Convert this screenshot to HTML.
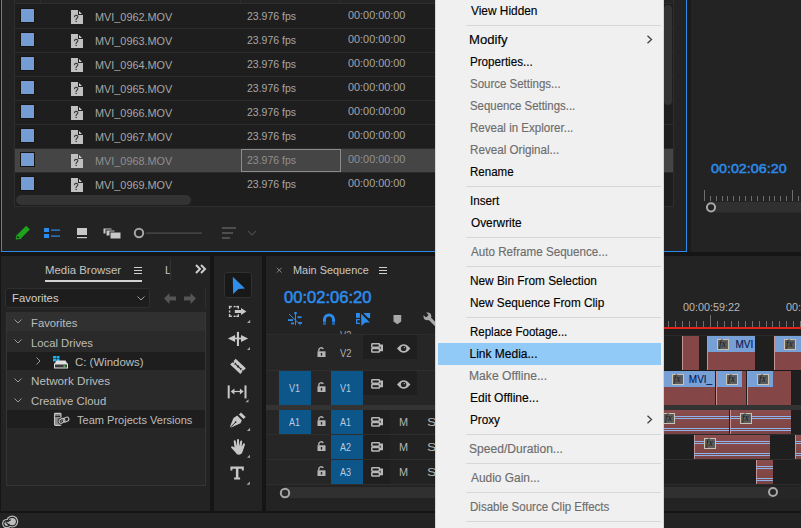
<!DOCTYPE html><html><head><meta charset="utf-8"><style>
*{margin:0;padding:0;box-sizing:border-box}
html,body{width:801px;height:528px;overflow:hidden;background:#151515;font-family:"Liberation Sans",sans-serif;position:relative}
.a{position:absolute}
.t{position:absolute;white-space:nowrap;line-height:1}
svg{position:absolute;overflow:visible}
</style></head><body>
<div class="a" style="left:1px;top:0px;width:686px;height:252px;background:#232323;border:1px solid #2d8ceb;border-top:none"></div>
<div class="a" style="left:14px;top:0px;width:660px;height:207px;background:#1e1e1e;border:1px solid #2e2e2e;border-top:none"></div>
<div class="a" style="left:15px;top:0px;width:658px;height:3px;background:#242424;"></div>
<div class="a" style="left:15px;top:3px;width:658px;height:1px;background:#2e2e2e;"></div>
<div class="a" style="left:40px;top:0px;width:1px;height:3px;background:#2e2e2e;"></div>
<div class="a" style="left:240px;top:0px;width:1px;height:3px;background:#2e2e2e;"></div>
<div class="a" style="left:340px;top:0px;width:1px;height:3px;background:#2e2e2e;"></div>
<div class="a" style="left:15px;top:28px;width:658px;height:1px;background:#2a2a2a;"></div>
<div class="a" style="left:20px;top:8px;width:15px;height:15px;background:#759dd3;border:1px solid #161412"></div>
<svg style="left:71px;top:10px" width="12" height="14" viewBox="0 0 12 14"><path d="M0 0H7V5H12V14H0Z" fill="#c0c0c0"/><path d="M8 1V4H11Z" fill="#d2d2d2"/><path d="M3.4 7.3Q3.5 5.4 5.2 5.4Q6.9 5.4 6.8 6.9Q6.7 7.8 5.8 8.4Q5.1 8.9 5.1 10" fill="none" stroke="#3a3a3a" stroke-width="1.1"/><rect x="4.5" y="10.8" width="1.3" height="1.2" fill="#3a3a3a"/></svg>
<div class="t" style="left:94.51px;top:12.00px;font-size:11px;font-weight:normal;font-style:normal;color:#a6a6a6;transform:scaleX(0.9870);transform-origin:0 0;">MVI_0962.MOV</div>
<div class="t" style="left:247.00px;top:11.00px;font-size:11px;font-weight:normal;font-style:normal;color:#a6a6a6;transform:scaleX(0.9549);transform-origin:0 0;">23.976 fps</div>
<div class="t" style="left:348.00px;top:10.00px;font-size:11px;font-weight:normal;font-style:normal;color:#a6a6a6;transform:scaleX(0.9879);transform-origin:0 0;">00:00:00:00</div>
<div class="a" style="left:15px;top:52px;width:658px;height:1px;background:#2a2a2a;"></div>
<div class="a" style="left:20px;top:32px;width:15px;height:15px;background:#759dd3;border:1px solid #161412"></div>
<svg style="left:71px;top:34px" width="12" height="14" viewBox="0 0 12 14"><path d="M0 0H7V5H12V14H0Z" fill="#c0c0c0"/><path d="M8 1V4H11Z" fill="#d2d2d2"/><path d="M3.4 7.3Q3.5 5.4 5.2 5.4Q6.9 5.4 6.8 6.9Q6.7 7.8 5.8 8.4Q5.1 8.9 5.1 10" fill="none" stroke="#3a3a3a" stroke-width="1.1"/><rect x="4.5" y="10.8" width="1.3" height="1.2" fill="#3a3a3a"/></svg>
<div class="t" style="left:94.51px;top:36.00px;font-size:11px;font-weight:normal;font-style:normal;color:#a6a6a6;transform:scaleX(0.9870);transform-origin:0 0;">MVI_0963.MOV</div>
<div class="t" style="left:247.00px;top:35.00px;font-size:11px;font-weight:normal;font-style:normal;color:#a6a6a6;transform:scaleX(0.9549);transform-origin:0 0;">23.976 fps</div>
<div class="t" style="left:348.00px;top:34.00px;font-size:11px;font-weight:normal;font-style:normal;color:#a6a6a6;transform:scaleX(0.9879);transform-origin:0 0;">00:00:00:00</div>
<div class="a" style="left:15px;top:76px;width:658px;height:1px;background:#2a2a2a;"></div>
<div class="a" style="left:20px;top:56px;width:15px;height:15px;background:#759dd3;border:1px solid #161412"></div>
<svg style="left:71px;top:58px" width="12" height="14" viewBox="0 0 12 14"><path d="M0 0H7V5H12V14H0Z" fill="#c0c0c0"/><path d="M8 1V4H11Z" fill="#d2d2d2"/><path d="M3.4 7.3Q3.5 5.4 5.2 5.4Q6.9 5.4 6.8 6.9Q6.7 7.8 5.8 8.4Q5.1 8.9 5.1 10" fill="none" stroke="#3a3a3a" stroke-width="1.1"/><rect x="4.5" y="10.8" width="1.3" height="1.2" fill="#3a3a3a"/></svg>
<div class="t" style="left:94.51px;top:60.00px;font-size:11px;font-weight:normal;font-style:normal;color:#a6a6a6;transform:scaleX(0.9870);transform-origin:0 0;">MVI_0964.MOV</div>
<div class="t" style="left:247.00px;top:59.00px;font-size:11px;font-weight:normal;font-style:normal;color:#a6a6a6;transform:scaleX(0.9549);transform-origin:0 0;">23.976 fps</div>
<div class="t" style="left:348.00px;top:58.00px;font-size:11px;font-weight:normal;font-style:normal;color:#a6a6a6;transform:scaleX(0.9879);transform-origin:0 0;">00:00:00:00</div>
<div class="a" style="left:15px;top:100px;width:658px;height:1px;background:#2a2a2a;"></div>
<div class="a" style="left:20px;top:80px;width:15px;height:15px;background:#759dd3;border:1px solid #161412"></div>
<svg style="left:71px;top:82px" width="12" height="14" viewBox="0 0 12 14"><path d="M0 0H7V5H12V14H0Z" fill="#c0c0c0"/><path d="M8 1V4H11Z" fill="#d2d2d2"/><path d="M3.4 7.3Q3.5 5.4 5.2 5.4Q6.9 5.4 6.8 6.9Q6.7 7.8 5.8 8.4Q5.1 8.9 5.1 10" fill="none" stroke="#3a3a3a" stroke-width="1.1"/><rect x="4.5" y="10.8" width="1.3" height="1.2" fill="#3a3a3a"/></svg>
<div class="t" style="left:94.51px;top:84.00px;font-size:11px;font-weight:normal;font-style:normal;color:#a6a6a6;transform:scaleX(0.9870);transform-origin:0 0;">MVI_0965.MOV</div>
<div class="t" style="left:247.00px;top:83.00px;font-size:11px;font-weight:normal;font-style:normal;color:#a6a6a6;transform:scaleX(0.9549);transform-origin:0 0;">23.976 fps</div>
<div class="t" style="left:348.00px;top:82.00px;font-size:11px;font-weight:normal;font-style:normal;color:#a6a6a6;transform:scaleX(0.9879);transform-origin:0 0;">00:00:00:00</div>
<div class="a" style="left:15px;top:124px;width:658px;height:1px;background:#2a2a2a;"></div>
<div class="a" style="left:20px;top:104px;width:15px;height:15px;background:#759dd3;border:1px solid #161412"></div>
<svg style="left:71px;top:106px" width="12" height="14" viewBox="0 0 12 14"><path d="M0 0H7V5H12V14H0Z" fill="#c0c0c0"/><path d="M8 1V4H11Z" fill="#d2d2d2"/><path d="M3.4 7.3Q3.5 5.4 5.2 5.4Q6.9 5.4 6.8 6.9Q6.7 7.8 5.8 8.4Q5.1 8.9 5.1 10" fill="none" stroke="#3a3a3a" stroke-width="1.1"/><rect x="4.5" y="10.8" width="1.3" height="1.2" fill="#3a3a3a"/></svg>
<div class="t" style="left:94.51px;top:108.00px;font-size:11px;font-weight:normal;font-style:normal;color:#a6a6a6;transform:scaleX(0.9870);transform-origin:0 0;">MVI_0966.MOV</div>
<div class="t" style="left:247.00px;top:107.00px;font-size:11px;font-weight:normal;font-style:normal;color:#a6a6a6;transform:scaleX(0.9549);transform-origin:0 0;">23.976 fps</div>
<div class="t" style="left:348.00px;top:106.00px;font-size:11px;font-weight:normal;font-style:normal;color:#a6a6a6;transform:scaleX(0.9879);transform-origin:0 0;">00:00:00:00</div>
<div class="a" style="left:15px;top:148px;width:658px;height:1px;background:#2a2a2a;"></div>
<div class="a" style="left:20px;top:128px;width:15px;height:15px;background:#759dd3;border:1px solid #161412"></div>
<svg style="left:71px;top:130px" width="12" height="14" viewBox="0 0 12 14"><path d="M0 0H7V5H12V14H0Z" fill="#c0c0c0"/><path d="M8 1V4H11Z" fill="#d2d2d2"/><path d="M3.4 7.3Q3.5 5.4 5.2 5.4Q6.9 5.4 6.8 6.9Q6.7 7.8 5.8 8.4Q5.1 8.9 5.1 10" fill="none" stroke="#3a3a3a" stroke-width="1.1"/><rect x="4.5" y="10.8" width="1.3" height="1.2" fill="#3a3a3a"/></svg>
<div class="t" style="left:94.51px;top:132.00px;font-size:11px;font-weight:normal;font-style:normal;color:#a6a6a6;transform:scaleX(0.9870);transform-origin:0 0;">MVI_0967.MOV</div>
<div class="t" style="left:247.00px;top:131.00px;font-size:11px;font-weight:normal;font-style:normal;color:#a6a6a6;transform:scaleX(0.9549);transform-origin:0 0;">23.976 fps</div>
<div class="t" style="left:348.00px;top:130.00px;font-size:11px;font-weight:normal;font-style:normal;color:#a6a6a6;transform:scaleX(0.9879);transform-origin:0 0;">00:00:00:00</div>
<div class="a" style="left:15px;top:149px;width:658px;height:23px;background:#454545;"></div>
<div class="a" style="left:15px;top:172px;width:658px;height:1px;background:#2a2a2a;"></div>
<div class="a" style="left:20px;top:152px;width:15px;height:15px;background:#759dd3;border:1px solid #161412"></div>
<svg style="left:71px;top:154px" width="12" height="14" viewBox="0 0 12 14"><path d="M0 0H7V5H12V14H0Z" fill="#c0c0c0"/><path d="M8 1V4H11Z" fill="#d2d2d2"/><path d="M3.4 7.3Q3.5 5.4 5.2 5.4Q6.9 5.4 6.8 6.9Q6.7 7.8 5.8 8.4Q5.1 8.9 5.1 10" fill="none" stroke="#3a3a3a" stroke-width="1.1"/><rect x="4.5" y="10.8" width="1.3" height="1.2" fill="#3a3a3a"/></svg>
<div class="t" style="left:94.51px;top:156.00px;font-size:11px;font-weight:normal;font-style:normal;color:#8f8f8f;transform:scaleX(0.9870);transform-origin:0 0;">MVI_0968.MOV</div>
<div class="t" style="left:247.00px;top:155.00px;font-size:11px;font-weight:normal;font-style:normal;color:#8f8f8f;transform:scaleX(0.9549);transform-origin:0 0;">23.976 fps</div>
<div class="t" style="left:348.00px;top:154.00px;font-size:11px;font-weight:normal;font-style:normal;color:#8f8f8f;transform:scaleX(0.9879);transform-origin:0 0;">00:00:00:00</div>
<div class="a" style="left:20px;top:176px;width:15px;height:15px;background:#759dd3;border:1px solid #161412"></div>
<svg style="left:71px;top:178px" width="12" height="14" viewBox="0 0 12 14"><path d="M0 0H7V5H12V14H0Z" fill="#c0c0c0"/><path d="M8 1V4H11Z" fill="#d2d2d2"/><path d="M3.4 7.3Q3.5 5.4 5.2 5.4Q6.9 5.4 6.8 6.9Q6.7 7.8 5.8 8.4Q5.1 8.9 5.1 10" fill="none" stroke="#3a3a3a" stroke-width="1.1"/><rect x="4.5" y="10.8" width="1.3" height="1.2" fill="#3a3a3a"/></svg>
<div class="t" style="left:94.51px;top:180.00px;font-size:11px;font-weight:normal;font-style:normal;color:#a6a6a6;transform:scaleX(0.9870);transform-origin:0 0;">MVI_0969.MOV</div>
<div class="t" style="left:247.00px;top:179.00px;font-size:11px;font-weight:normal;font-style:normal;color:#a6a6a6;transform:scaleX(0.9549);transform-origin:0 0;">23.976 fps</div>
<div class="t" style="left:348.00px;top:178.00px;font-size:11px;font-weight:normal;font-style:normal;color:#a6a6a6;transform:scaleX(0.9879);transform-origin:0 0;">00:00:00:00</div>
<div class="a" style="left:241px;top:149px;width:100px;height:23px;background:transparent;border:1px solid #8c8c8c"></div>
<div class="a" style="left:16px;top:195px;width:175px;height:10px;background:#333;border-radius:5px"></div>
<div class="a" style="left:664px;top:5px;width:8px;height:100px;background:#333;border-radius:4px"></div>
<svg style="left:12.5px;top:224.3px" width="18" height="17" viewBox="0 0 18 17"><path d="M3 15L4.2 10.8L13.2 1.8L16.9 5.5L7.9 14.5Z" fill="#1ea31e"/><path d="M3.4 14.6L4.6 11.4L7.3 14Z" fill="#232323"/><path d="M3 15L4.2 10.8L7.9 14.5Z" fill="none" stroke="#1ea31e" stroke-width="1"/></svg>
<svg style="left:43px;top:227px" width="18" height="12" viewBox="0 0 18 12"><rect x="1" y="1" width="5" height="4" fill="#2d8ceb"/><rect x="1" y="7" width="5" height="4" fill="#2d8ceb"/><rect x="8" y="2.5" width="9" height="1.2" fill="#2d8ceb"/><rect x="8" y="8.5" width="9" height="1.2" fill="#2d8ceb"/></svg>
<svg style="left:76px;top:227px" width="12" height="12" viewBox="0 0 12 12"><rect x="1" y="1" width="10" height="7" fill="#c8c8c8"/><rect x="1" y="10" width="10" height="1.2" fill="#c8c8c8"/></svg>
<svg style="left:102px;top:227px" width="20" height="12" viewBox="0 0 20 12"><rect x="1" y="1" width="9" height="6" fill="#c8c8c8" stroke="#232323"/><rect x="4" y="3" width="9" height="6" fill="#c8c8c8" stroke="#232323"/><rect x="8" y="5" width="11" height="7" fill="#c8c8c8" stroke="#232323"/></svg>
<svg style="left:132px;top:226px" width="72" height="14" viewBox="0 0 72 14"><circle cx="7" cy="7" r="4.2" fill="none" stroke="#a5a5a5" stroke-width="2"/><rect x="14" y="6.5" width="56" height="1.2" fill="#505050"/></svg>
<svg style="left:221px;top:226px" width="16" height="14" viewBox="0 0 16 14"><rect x="1" y="1" width="14" height="2" fill="#4e4e4e"/><rect x="1" y="6" width="11" height="2" fill="#4e4e4e"/><rect x="1" y="11" width="8" height="2" fill="#4e4e4e"/></svg>
<svg style="left:247px;top:230px" width="10" height="6" viewBox="0 0 10 6"><path d="M1 1L5 5L9 1" fill="none" stroke="#4a4a4a" stroke-width="1.2"/></svg>
<div class="a" style="left:687px;top:0px;width:4px;height:252px;background:#1b1b1b;"></div>
<div class="a" style="left:691px;top:0px;width:110px;height:252px;background:#232323;"></div>
<div class="t" style="left:711.00px;top:162.00px;font-size:13.7px;font-weight:normal;font-style:normal;color:#2d8ceb;transform:scaleX(1.0458);transform-origin:0 0;-webkit-text-stroke:0.5px #2d8ceb">00:02:06:20</div>
<svg style="left:0;top:0" width="801" height="252"><rect x="704" y="190" width="1" height="11" fill="#6e6e6e"/><rect x="710" y="196" width="1" height="5" fill="#6e6e6e"/><rect x="716" y="196" width="1" height="5" fill="#6e6e6e"/><rect x="722" y="196" width="1" height="5" fill="#6e6e6e"/><rect x="727" y="196" width="1" height="5" fill="#6e6e6e"/><rect x="733" y="196" width="1" height="5" fill="#6e6e6e"/><rect x="739" y="196" width="1" height="5" fill="#6e6e6e"/><rect x="745" y="196" width="1" height="5" fill="#6e6e6e"/><rect x="751" y="196" width="1" height="5" fill="#6e6e6e"/><rect x="757" y="196" width="1" height="5" fill="#6e6e6e"/><rect x="763" y="196" width="1" height="5" fill="#6e6e6e"/><rect x="769" y="196" width="1" height="5" fill="#6e6e6e"/><rect x="774" y="196" width="1" height="5" fill="#6e6e6e"/><rect x="780" y="196" width="1" height="5" fill="#6e6e6e"/><rect x="786" y="196" width="1" height="5" fill="#6e6e6e"/><rect x="792" y="190" width="1" height="11" fill="#6e6e6e"/><rect x="798" y="196" width="1" height="5" fill="#6e6e6e"/><rect x="711" y="202" width="90" height="10.5" fill="#303030"/><circle cx="711" cy="207.3" r="4.1" fill="#232323" stroke="#a8a8a8" stroke-width="2"/></svg>
<div class="a" style="left:1px;top:256px;width:209px;height:255px;background:#232323;"></div>
<div class="t" style="left:45.16px;top:265.00px;font-size:11px;font-weight:normal;font-style:normal;color:#c4c4c4;transform:scaleX(1.0375);transform-origin:0 0;">Media Browser</div>
<div class="a" style="left:45px;top:280px;width:97px;height:2px;background:#d2d2d2;"></div>
<div class="a" style="left:134px;top:267px;width:8px;height:1.3px;background:#d0d0d0;"></div>
<div class="a" style="left:134px;top:270px;width:8px;height:1.3px;background:#d0d0d0;"></div>
<div class="a" style="left:134px;top:273px;width:8px;height:1.3px;background:#d0d0d0;"></div>
<div class="t" style="left:165.00px;top:265.00px;font-size:11px;font-weight:normal;font-style:normal;color:#c4c4c4;">L</div>
<div class="a" style="left:170px;top:259px;width:1px;height:21px;background:#333;"></div>
<svg style="left:195px;top:264px" width="12" height="10" viewBox="0 0 12 10"><path d="M1 1L5 5L1 9M6 1L10 5L6 9" fill="none" stroke="#cfcfcf" stroke-width="2"/></svg>
<div class="a" style="left:5px;top:288px;width:145px;height:20px;background:#1d1d1d;border:1px solid #2e2e2e;border-radius:3px"></div>
<div class="t" style="left:12.17px;top:293.00px;font-size:11px;font-weight:normal;font-style:normal;color:#cfcfcf;transform:scaleX(1.0295);transform-origin:0 0;">Favorites</div>
<svg style="left:137px;top:296px" width="8" height="5" viewBox="0 0 8 5"><path d="M0.5 0.5L4 4L7.5 0.5" fill="none" stroke="#a0a0a0" stroke-width="1"/></svg>
<svg style="left:164px;top:293px" width="12" height="11" viewBox="0 0 12 11"><path d="M0 5.5L5.5 0V3.5H12V7.5H5.5V11Z" fill="#555"/></svg>
<svg style="left:184px;top:293px" width="12" height="11" viewBox="0 0 12 11"><path d="M12 5.5L6.5 0V3.5H0V7.5H6.5V11Z" fill="#555"/></svg>
<div class="a" style="left:205px;top:288px;width:1px;height:20px;background:#2e2e2e;"></div>
<div class="a" style="left:6px;top:312px;width:200px;height:174px;background:#262626;border:1px solid #353535;border-top:none"></div>
<div class="a" style="left:7px;top:312px;width:198px;height:19px;background:#303030;"></div>
<svg style="left:14px;top:319.2px" width="8" height="5" viewBox="0 0 8 5"><path d="M0.5 0.5L4 4L7.5 0.5" fill="none" stroke="#9a9a9a" stroke-width="1"/></svg>
<div class="t" style="left:31.08px;top:318.00px;font-size:11px;font-weight:normal;font-style:normal;color:#bdbdbd;transform:scaleX(1.0250);transform-origin:0 0;">Favorites</div>
<div class="a" style="left:7px;top:331px;width:198px;height:21px;background:#2a2a2a;"></div>
<svg style="left:14px;top:339.2px" width="8" height="5" viewBox="0 0 8 5"><path d="M0.5 0.5L4 4L7.5 0.5" fill="none" stroke="#9a9a9a" stroke-width="1"/></svg>
<div class="t" style="left:31.08px;top:338.00px;font-size:11px;font-weight:normal;font-style:normal;color:#bdbdbd;transform:scaleX(1.0237);transform-origin:0 0;">Local Drives</div>
<div class="a" style="left:7px;top:352px;width:198px;height:18px;background:#1e1e1e;"></div>
<svg style="left:36px;top:357.0px" width="5" height="8" viewBox="0 0 5 8"><path d="M0.5 0.5L4 4L0.5 7.5" fill="none" stroke="#9a9a9a" stroke-width="1"/></svg>
<div class="t" style="left:75.46px;top:357.00px;font-size:11px;font-weight:normal;font-style:normal;color:#bdbdbd;transform:scaleX(1.0391);transform-origin:0 0;">C: (Windows)</div>
<div class="a" style="left:7px;top:370px;width:198px;height:20px;background:#2a2a2a;"></div>
<svg style="left:14px;top:377.7px" width="8" height="5" viewBox="0 0 8 5"><path d="M0.5 0.5L4 4L7.5 0.5" fill="none" stroke="#9a9a9a" stroke-width="1"/></svg>
<div class="t" style="left:31.04px;top:376.00px;font-size:11px;font-weight:normal;font-style:normal;color:#bdbdbd;transform:scaleX(1.0616);transform-origin:0 0;">Network Drives</div>
<div class="a" style="left:7px;top:390px;width:198px;height:20px;background:#2a2a2a;"></div>
<svg style="left:14px;top:397.7px" width="8" height="5" viewBox="0 0 8 5"><path d="M0.5 0.5L4 4L7.5 0.5" fill="none" stroke="#9a9a9a" stroke-width="1"/></svg>
<div class="t" style="left:31.07px;top:396.00px;font-size:11px;font-weight:normal;font-style:normal;color:#bdbdbd;transform:scaleX(1.0338);transform-origin:0 0;">Creative Cloud</div>
<div class="a" style="left:7px;top:410px;width:198px;height:18px;background:#1e1e1e;"></div>
<div class="t" style="left:76.70px;top:415.00px;font-size:11px;font-weight:normal;font-style:normal;color:#bdbdbd;transform:scaleX(1.0035);transform-origin:0 0;">Team Projects Versions</div>
<svg style="left:52px;top:355px" width="17" height="14" viewBox="0 0 17 14"><rect x="1" y="1" width="3" height="2.5" fill="#1aaff0"/><rect x="4.5" y="1" width="3" height="2.5" fill="#1aaff0"/><rect x="1" y="4" width="3" height="2.5" fill="#1aaff0"/><rect x="4.5" y="4" width="3" height="2.5" fill="#1aaff0"/><path d="M4.5 5.5H13.5L15.5 9H2.5Z" fill="#e0e0e0"/><rect x="2.5" y="9" width="13" height="4" fill="#3a3a3a" stroke="#e0e0e0" stroke-width="1"/><rect x="11.5" y="10.5" width="1.8" height="1.5" fill="#3bd14b"/></svg>
<svg style="left:53px;top:412px" width="17" height="14" viewBox="0 0 17 14"><rect x="1.5" y="1.4" width="6.5" height="12" rx="0.8" fill="#8a8a8a" stroke="#c4c4c4" stroke-width="1.1"/><rect x="2.2" y="3.8" width="5.1" height="1.1" fill="#1e1e1e"/><rect x="6" y="6.8" width="6" height="4" rx="2" transform="rotate(-28 9 8.8)" fill="none" stroke="#1e1e1e" stroke-width="2.6"/><rect x="6" y="6.8" width="6" height="4" rx="2" transform="rotate(-28 9 8.8)" fill="none" stroke="#c4c4c4" stroke-width="1.1"/><rect x="10" y="5.6" width="6" height="4" rx="2" transform="rotate(-28 13 7.6)" fill="none" stroke="#c4c4c4" stroke-width="1.1"/></svg>
<div class="a" style="left:214px;top:256px;width:48px;height:255px;background:#232323;"></div>
<div class="a" style="left:224px;top:272px;width:28px;height:26px;background:#181818;border:1px solid #313131;border-radius:3px"></div>
<svg style="left:0;top:0" width="801" height="528"><path d="M232.8 276.8L245 288.5L238.5 289L233.1 294.1Z" fill="#2f8ee9"/><rect x="228.9" y="305.9" width="3" height="1.4" fill="#c8c8c8"/><rect x="228.9" y="305.9" width="1.4" height="3" fill="#c8c8c8"/><rect x="233.6" y="305.9" width="2" height="1.4" fill="#c8c8c8"/><rect x="236.3" y="305.9" width="2.7" height="1.4" fill="#c8c8c8"/><rect x="237.6" y="305.9" width="1.4" height="2.8" fill="#c8c8c8"/><rect x="236.3" y="315.6" width="2.7" height="1.4" fill="#c8c8c8"/><rect x="237.6" y="314.3" width="1.4" height="2.7" fill="#c8c8c8"/><rect x="233.6" y="315.6" width="2" height="1.4" fill="#c8c8c8"/><rect x="228.9" y="315.6" width="3" height="1.4" fill="#c8c8c8"/><rect x="228.9" y="314" width="1.4" height="3" fill="#c8c8c8"/><rect x="228.9" y="310.4" width="1.4" height="2.2" fill="#c8c8c8"/><path d="M234.8 310.1H241V308.1L246.4 311.5L241 315V313H234.8Z" fill="#c8c8c8"/><path d="M247 323L250.2 319.8V323Z" fill="#a8a8a8"/><rect x="236.9" y="331.9" width="2.1" height="14.1" fill="#c8c8c8"/><path d="M227.9 338.4L235.1 334.9V342Z M248.1 338.4L241 334.9V342Z" fill="#c8c8c8"/><rect x="235" y="337.6" width="6" height="1.7" fill="#c8c8c8"/><path d="M247 350L250 347V350Z" fill="#a8a8a8"/><g transform="translate(238,366.4) rotate(43.5)"><rect x="-7" y="-4" width="14" height="8" fill="#c8c8c8"/><path d="M-4.5 -1.5L-3 0L-4.5 1.5Z M4.5 -1.5L3 0L4.5 1.5Z" fill="#222"/><rect x="-4" y="-0.55" width="8" height="1.1" fill="#222"/><circle cx="0" cy="0" r="1.1" fill="#222"/><path d="M-7 -1.2A1.2 1.2 0 0 1 -7 1.2Z M7 -1.2A1.2 1.2 0 0 0 7 1.2Z" fill="#232323"/></g><rect x="227.7" y="385.4" width="2" height="13" fill="#c8c8c8"/><rect x="244.5" y="385.4" width="2" height="13" fill="#c8c8c8"/><path d="M230.7 391.5L234.4 388.6V394.6Z M243.6 391.5L239.9 388.6V394.6Z" fill="#c8c8c8"/><rect x="234" y="390.9" width="6.2" height="1.2" fill="#c8c8c8"/><path d="M245.4 402.3L248.5 399.2V402.3Z" fill="#a8a8a8"/><path d="M238.8 414.4L241 412.4L245.7 417.1L243.5 419.1Z" fill="#c8c8c8"/><path d="M233.5 418L237.2 415.6L241.8 420.2L240.5 423.2L231.2 427.6L230 426.6Z" fill="#c8c8c8"/><path d="M231 426.8L235.5 422.3" stroke="#232323" stroke-width="1"/><circle cx="235.6" cy="422.2" r="0.9" fill="#232323"/><path d="M246.9 430.9L250.1 427.7V430.9Z" fill="#a8a8a8"/><path d="M234.5 447.5L233.7 441.2A1 1 0 0 1 235.6 440.8L236.9 446.3L237 440A1 1 0 0 1 239 440L239.3 446.2L240.3 441A1 1 0 0 1 242.2 441.4L241.6 446.8L243.3 443.6A1 1 0 0 1 245 444.4L242.4 452.3A3.6 3.6 0 0 1 235.6 452.5L231.2 447.7A1 1 0 0 1 232.4 446.3Z" fill="#c8c8c8"/><path d="M247 457.7L250 454.7V457.7Z" fill="#a8a8a8"/><path d="M230.4 466.4H243.8V470.4H241.8V468.7H238.4V477.6H240.1V479.6H234.1V477.6H235.9V468.7H232.4V470.4H230.4Z" fill="#c8c8c8"/><path d="M246.6 484.8L249.8 481.6V484.8Z" fill="#a8a8a8"/></svg>
<div class="a" style="left:266px;top:256px;width:535px;height:255px;background:#232323;"></div>
<svg style="left:275.3px;top:266.3px" width="8" height="8" viewBox="0 0 8 8"><path d="M1.8 1.8L6.6 6.6M6.6 1.8L1.8 6.6" stroke="#858585" stroke-width="1"/></svg>
<div class="t" style="left:293.21px;top:265.00px;font-size:11px;font-weight:normal;font-style:normal;color:#c8c8c8;transform:scaleX(0.9907);transform-origin:0 0;">Main Sequence</div>
<div class="a" style="left:379px;top:267px;width:8px;height:1.3px;background:#cfcfcf;"></div>
<div class="a" style="left:379px;top:270px;width:8px;height:1.3px;background:#cfcfcf;"></div>
<div class="a" style="left:379px;top:273px;width:8px;height:1.3px;background:#cfcfcf;"></div>
<div class="t" style="left:284.00px;top:289.00px;font-size:16.5px;font-weight:normal;font-style:normal;color:#2d8ceb;transform:scaleX(1.0035);transform-origin:0 0;-webkit-text-stroke:0.55px #2d8ceb">00:02:06:20</div>
<svg style="left:0;top:0" width="801" height="528"><rect x="294.3" y="312" width="2.4" height="2.2" fill="#2d8ceb"/><rect x="295" y="314" width="1" height="11" fill="#2d8ceb"/><rect x="288" y="319.2" width="5" height="1.8" fill="#2d8ceb"/><rect x="297.5" y="316.3" width="4" height="1.8" fill="#2d8ceb"/><rect x="291" y="322.5" width="3" height="1.8" fill="#2d8ceb"/><rect x="298.5" y="322" width="3.5" height="1.8" fill="#2d8ceb"/><path d="M289 314L300.5 325" stroke="#2d8ceb" stroke-width="1"/><path d="M323 325V319.5A6 6 0 0 1 335 319.5V325H332V319.5A3 3 0 0 0 326 319.5V325Z" fill="#2d8ceb"/><rect x="323" y="321.5" width="3" height="3.5" fill="#1f5fa0"/><rect x="332" y="321.5" width="3" height="3.5" fill="#1f5fa0"/><rect x="356" y="313" width="3.9" height="4.8" fill="#2d8ceb"/><path d="M359.9 319.6H356.6V323.4H359.9" fill="none" stroke="#2d8ceb" stroke-width="1.2"/><path d="M363.3 313H370.1V318H368.3Z" fill="#2d8ceb"/><path d="M361 313.8L369.9 322.4L365.3 322.6L361.4 326.1Z" fill="#2d8ceb"/><path d="M393.5 315H401.2V321.5L397.35 324.3L393.5 321.5Z" fill="#a8a8a8"/><circle cx="427.4" cy="316.3" r="3.9" fill="#aaaaaa"/><path d="M427.4 316.3L436 324.8" stroke="#aaaaaa" stroke-width="3.3"/><path d="M422.6 314.2L425.2 311.6L428.6 315L426 317.6Z" fill="#232323"/></svg>
<div class="a" style="left:330px;top:329px;width:40px;height:5px;overflow:hidden"><div class="a" style="left:-330px;top:-329px;width:801px;height:528px"><div class="t" style="left:340.00px;top:331.00px;font-size:10px;font-weight:normal;font-style:normal;color:#a0a0a0;transform:scaleX(0.9333);transform-origin:0 0;">V2</div></div></div>
<div class="a" style="left:266px;top:334px;width:169px;height:1px;background:#2c2c2c;"></div>
<div class="a" style="left:266px;top:335px;width:169px;height:35px;background:#262626;"></div>
<div class="a" style="left:363px;top:335px;width:54px;height:24px;background:#1f1f1f;"></div>
<svg style="left:317px;top:347px" width="9" height="10" viewBox="0 0 9 10"><path d="M1.8 4.5V3.2A2.4 2.4 0 0 1 6.3 2" fill="none" stroke="#b5b5b5" stroke-width="1.4"/><rect x="0.5" y="4.3" width="8" height="5.7" fill="#b5b5b5"/><rect x="3.8" y="6" width="1.4" height="2.6" fill="#262626"/></svg>
<div class="t" style="left:340.00px;top:349.00px;font-size:10px;font-weight:normal;font-style:normal;color:#b0b0b0;transform:scaleX(0.9333);transform-origin:0 0;">V2</div>
<svg style="left:371px;top:343px" width="13" height="10" viewBox="0 0 13 10"><rect x="0.8" y="0.8" width="7.6" height="3.4" rx="0.6" fill="none" stroke="#b8b8b8" stroke-width="1.5"/><rect x="0.8" y="5.6" width="7.6" height="3.4" rx="0.6" fill="none" stroke="#b8b8b8" stroke-width="1.5"/><path d="M8.4 1.5H12V8.2H8.4V6H9.6V3.6H8.4Z" fill="#b8b8b8"/></svg>
<svg style="left:397px;top:344px" width="14" height="9" viewBox="0 0 14 9"><path d="M0 4.5Q6.7 -4 13.4 4.5Q6.7 13 0 4.5Z" fill="#b8b8b8"/><circle cx="6.6" cy="4.4" r="2.7" fill="#222"/><circle cx="7.4" cy="3.6" r="0.75" fill="#9a9a9a"/></svg>
<div class="a" style="left:266px;top:370px;width:169px;height:1px;background:#2e2e2e;"></div>
<div class="a" style="left:266px;top:371px;width:169px;height:34px;background:#262626;"></div>
<div class="a" style="left:363px;top:371px;width:54px;height:24px;background:#1f1f1f;"></div>
<div class="a" style="left:279px;top:371px;width:32px;height:34px;background:#0c5689;"></div>
<div class="a" style="left:331px;top:371px;width:32px;height:34px;background:#0c5689;"></div>
<div class="t" style="left:289.10px;top:384.00px;font-size:10px;font-weight:normal;font-style:normal;color:#b9cbe0;transform:scaleX(0.9000);transform-origin:0 0;">V1</div>
<div class="t" style="left:340.00px;top:384.00px;font-size:10px;font-weight:normal;font-style:normal;color:#b9cbe0;transform:scaleX(0.9000);transform-origin:0 0;">V1</div>
<svg style="left:317px;top:382px" width="9" height="10" viewBox="0 0 9 10"><path d="M1.8 4.5V3.2A2.4 2.4 0 0 1 6.3 2" fill="none" stroke="#b5b5b5" stroke-width="1.4"/><rect x="0.5" y="4.3" width="8" height="5.7" fill="#b5b5b5"/><rect x="3.8" y="6" width="1.4" height="2.6" fill="#262626"/></svg>
<svg style="left:371px;top:379px" width="13" height="10" viewBox="0 0 13 10"><rect x="0.8" y="0.8" width="7.6" height="3.4" rx="0.6" fill="none" stroke="#b8b8b8" stroke-width="1.5"/><rect x="0.8" y="5.6" width="7.6" height="3.4" rx="0.6" fill="none" stroke="#b8b8b8" stroke-width="1.5"/><path d="M8.4 1.5H12V8.2H8.4V6H9.6V3.6H8.4Z" fill="#b8b8b8"/></svg>
<svg style="left:397px;top:380px" width="14" height="9" viewBox="0 0 14 9"><path d="M0 4.5Q6.7 -4 13.4 4.5Q6.7 13 0 4.5Z" fill="#b8b8b8"/><circle cx="6.6" cy="4.4" r="2.7" fill="#222"/><circle cx="7.4" cy="3.6" r="0.75" fill="#9a9a9a"/></svg>
<div class="a" style="left:266px;top:405px;width:169px;height:5px;background:#333;"></div>
<div class="a" style="left:266px;top:410px;width:169px;height:24px;background:#262626;"></div>
<div class="a" style="left:363px;top:410px;width:27px;height:24px;background:#1f1f1f;"></div>
<div class="a" style="left:390px;top:410px;width:45px;height:24px;background:#222;"></div>
<div class="a" style="left:279px;top:410px;width:32px;height:24px;background:#0c5689;"></div>
<div class="t" style="left:289.10px;top:418.00px;font-size:10px;font-weight:normal;font-style:normal;color:#b9cbe0;transform:scaleX(0.9000);transform-origin:0 0;">A1</div>
<div class="a" style="left:331px;top:410px;width:32px;height:24px;background:#0c5689;"></div>
<div class="t" style="left:340.00px;top:418.00px;font-size:10px;font-weight:normal;font-style:normal;color:#b9cbe0;transform:scaleX(0.9000);transform-origin:0 0;">A1</div>
<svg style="left:317px;top:416px" width="9" height="10" viewBox="0 0 9 10"><path d="M1.8 4.5V3.2A2.4 2.4 0 0 1 6.3 2" fill="none" stroke="#b5b5b5" stroke-width="1.4"/><rect x="0.5" y="4.3" width="8" height="5.7" fill="#b5b5b5"/><rect x="3.8" y="6" width="1.4" height="2.6" fill="#262626"/></svg>
<svg style="left:371px;top:417px" width="13" height="10" viewBox="0 0 13 10"><rect x="0.8" y="0.8" width="7.6" height="3.4" rx="0.6" fill="none" stroke="#b8b8b8" stroke-width="1.5"/><rect x="0.8" y="5.6" width="7.6" height="3.4" rx="0.6" fill="none" stroke="#b8b8b8" stroke-width="1.5"/><path d="M8.4 1.5H12V8.2H8.4V6H9.6V3.6H8.4Z" fill="#b8b8b8"/></svg>
<div class="t" style="left:398.61px;top:418.00px;font-size:10px;font-weight:normal;font-style:normal;color:#b5b5b5;transform:scaleX(1.0857);transform-origin:0 0;">M</div>
<div class="t" style="left:426.60px;top:418.00px;font-size:10px;font-weight:normal;font-style:normal;color:#b5b5b5;transform:scaleX(1.4000);transform-origin:0 0;">S</div>
<div class="a" style="left:266px;top:434px;width:169px;height:1px;background:#2e2e2e;"></div>
<div class="a" style="left:266px;top:435px;width:169px;height:24px;background:#262626;"></div>
<div class="a" style="left:363px;top:435px;width:27px;height:24px;background:#1f1f1f;"></div>
<div class="a" style="left:390px;top:435px;width:45px;height:24px;background:#222;"></div>
<div class="a" style="left:331px;top:435px;width:32px;height:24px;background:#0c5689;"></div>
<div class="t" style="left:340.00px;top:443.00px;font-size:10px;font-weight:normal;font-style:normal;color:#b9cbe0;transform:scaleX(0.9000);transform-origin:0 0;">A2</div>
<svg style="left:317px;top:441px" width="9" height="10" viewBox="0 0 9 10"><path d="M1.8 4.5V3.2A2.4 2.4 0 0 1 6.3 2" fill="none" stroke="#b5b5b5" stroke-width="1.4"/><rect x="0.5" y="4.3" width="8" height="5.7" fill="#b5b5b5"/><rect x="3.8" y="6" width="1.4" height="2.6" fill="#262626"/></svg>
<svg style="left:371px;top:442px" width="13" height="10" viewBox="0 0 13 10"><rect x="0.8" y="0.8" width="7.6" height="3.4" rx="0.6" fill="none" stroke="#b8b8b8" stroke-width="1.5"/><rect x="0.8" y="5.6" width="7.6" height="3.4" rx="0.6" fill="none" stroke="#b8b8b8" stroke-width="1.5"/><path d="M8.4 1.5H12V8.2H8.4V6H9.6V3.6H8.4Z" fill="#b8b8b8"/></svg>
<div class="t" style="left:398.61px;top:443.00px;font-size:10px;font-weight:normal;font-style:normal;color:#b5b5b5;transform:scaleX(1.0857);transform-origin:0 0;">M</div>
<div class="t" style="left:426.60px;top:443.00px;font-size:10px;font-weight:normal;font-style:normal;color:#b5b5b5;transform:scaleX(1.4000);transform-origin:0 0;">S</div>
<div class="a" style="left:266px;top:459px;width:169px;height:1px;background:#2e2e2e;"></div>
<div class="a" style="left:266px;top:460px;width:169px;height:24px;background:#262626;"></div>
<div class="a" style="left:363px;top:460px;width:27px;height:24px;background:#1f1f1f;"></div>
<div class="a" style="left:390px;top:460px;width:45px;height:24px;background:#222;"></div>
<div class="a" style="left:331px;top:460px;width:32px;height:24px;background:#0c5689;"></div>
<div class="t" style="left:340.00px;top:468.00px;font-size:10px;font-weight:normal;font-style:normal;color:#b9cbe0;transform:scaleX(0.9000);transform-origin:0 0;">A3</div>
<svg style="left:317px;top:466px" width="9" height="10" viewBox="0 0 9 10"><path d="M1.8 4.5V3.2A2.4 2.4 0 0 1 6.3 2" fill="none" stroke="#b5b5b5" stroke-width="1.4"/><rect x="0.5" y="4.3" width="8" height="5.7" fill="#b5b5b5"/><rect x="3.8" y="6" width="1.4" height="2.6" fill="#262626"/></svg>
<svg style="left:371px;top:467px" width="13" height="10" viewBox="0 0 13 10"><rect x="0.8" y="0.8" width="7.6" height="3.4" rx="0.6" fill="none" stroke="#b8b8b8" stroke-width="1.5"/><rect x="0.8" y="5.6" width="7.6" height="3.4" rx="0.6" fill="none" stroke="#b8b8b8" stroke-width="1.5"/><path d="M8.4 1.5H12V8.2H8.4V6H9.6V3.6H8.4Z" fill="#b8b8b8"/></svg>
<div class="t" style="left:398.61px;top:468.00px;font-size:10px;font-weight:normal;font-style:normal;color:#b5b5b5;transform:scaleX(1.0857);transform-origin:0 0;">M</div>
<div class="t" style="left:426.60px;top:468.00px;font-size:10px;font-weight:normal;font-style:normal;color:#b5b5b5;transform:scaleX(1.4000);transform-origin:0 0;">S</div>
<div class="a" style="left:266px;top:484px;width:169px;height:1px;background:#2e2e2e;"></div>
<div class="a" style="left:285px;top:487px;width:150px;height:11px;background:#303030;"></div>
<svg style="left:279px;top:486.5px" width="12" height="12" viewBox="0 0 12 12"><circle cx="6" cy="6" r="4.2" fill="#2b2b2b" stroke="#a8a8a8" stroke-width="2"/></svg>
<div class="a" style="left:664px;top:256px;width:137px;height:79px;background:#232323;"></div>
<div class="t" style="left:682.80px;top:302.00px;font-size:11px;font-weight:normal;font-style:normal;color:#b8b8b8;transform:scaleX(0.9828);transform-origin:0 0;">00:00:59:22</div>
<div class="t" style="left:786.00px;top:302.00px;font-size:11px;font-weight:normal;font-style:normal;color:#b8b8b8;transform:scaleX(0.9828);transform-origin:0 0;">00:00:59:22</div>
<svg style="left:0;top:0" width="801" height="528"><rect x="661" y="321" width="1" height="6" fill="#6e6e6e"/><rect x="668" y="321" width="1" height="6" fill="#6e6e6e"/><rect x="675" y="321" width="1" height="6" fill="#6e6e6e"/><rect x="682" y="321" width="1" height="6" fill="#6e6e6e"/><rect x="689" y="321" width="1" height="6" fill="#6e6e6e"/><rect x="696" y="321" width="1" height="6" fill="#6e6e6e"/><rect x="703" y="321" width="1" height="6" fill="#6e6e6e"/><rect x="710" y="315" width="1" height="12" fill="#6e6e6e"/><rect x="717" y="321" width="1" height="6" fill="#6e6e6e"/><rect x="724" y="321" width="1" height="6" fill="#6e6e6e"/><rect x="731" y="321" width="1" height="6" fill="#6e6e6e"/><rect x="738" y="321" width="1" height="6" fill="#6e6e6e"/><rect x="745" y="321" width="1" height="6" fill="#6e6e6e"/><rect x="752" y="321" width="1" height="6" fill="#6e6e6e"/><rect x="759" y="321" width="1" height="6" fill="#6e6e6e"/><rect x="766" y="321" width="1" height="6" fill="#6e6e6e"/><rect x="772" y="321" width="1" height="6" fill="#6e6e6e"/><rect x="779" y="321" width="1" height="6" fill="#6e6e6e"/><rect x="786" y="321" width="1" height="6" fill="#6e6e6e"/><rect x="793" y="321" width="1" height="6" fill="#6e6e6e"/><rect x="800" y="321" width="1" height="6" fill="#6e6e6e"/><rect x="664" y="327" width="137" height="2" fill="#e1241c"/></svg>
<div class="a" style="left:664px;top:329px;width:137px;height:6px;background:#1e1e1e;"></div>
<div class="a" style="left:664px;top:335px;width:137px;height:1px;background:#2a2a2a;"></div>
<div class="a" style="left:664px;top:336px;width:137px;height:69px;background:#1f1f1f;"></div>
<div class="a" style="left:664px;top:370px;width:137px;height:1px;background:#1a1a1a;"></div>
<div class="a" style="left:664px;top:405px;width:137px;height:5px;background:#333;"></div>
<div class="a" style="left:664px;top:410px;width:137px;height:75px;background:#1f1f1f;"></div>
<div class="a" style="left:664px;top:434px;width:137px;height:1px;background:#2c2c2c;"></div>
<div class="a" style="left:664px;top:459px;width:137px;height:1px;background:#2c2c2c;"></div>
<div class="a" style="left:664px;top:484px;width:137px;height:1px;background:#2c2c2c;"></div>
<div class="a" style="left:682px;top:336px;width:17px;height:34px;background:#844646"></div><div class="a" style="left:682px;top:336px;width:1px;height:34px;background:#c69494"></div>
<div class="a" style="left:707px;top:336px;width:48px;height:34px;background:#844646"></div><div class="a" style="left:707px;top:336px;width:48px;height:16px;background:#76a0d6"></div><div class="a" style="left:717px;top:339px;width:12px;height:11px;background:#5c5c5c;border:1px solid #c9c3b6"></div><div class="t" style="left:719px;top:339.8px;font-family:'Liberation Serif',serif;font-style:italic;font-size:9.5px;color:#1c1c1c">fx</div><div class="t" style="left:735.50px;top:340.00px;font-size:10px;font-weight:normal;font-style:normal;color:#071650;-webkit-text-stroke:0.1px #071650">MVI</div><div class="a" style="left:707px;top:336px;width:1px;height:34px;background:#c69494"></div>
<div class="a" style="left:774px;top:336px;width:27px;height:34px;background:#844646"></div><div class="a" style="left:774px;top:336px;width:27px;height:16px;background:#76a0d6"></div><div class="a" style="left:784px;top:339px;width:12px;height:11px;background:#5c5c5c;border:1px solid #c9c3b6"></div><div class="t" style="left:786px;top:339.8px;font-family:'Liberation Serif',serif;font-style:italic;font-size:9.5px;color:#1c1c1c">fx</div><div class="a" style="left:774px;top:336px;width:1px;height:34px;background:#c69494"></div>
<div class="a" style="left:664px;top:371px;width:51px;height:34px;background:#844646"></div><div class="a" style="left:664px;top:371px;width:51px;height:16px;background:#76a0d6"></div><div class="a" style="left:671.5px;top:374px;width:12px;height:11px;background:#5c5c5c;border:1px solid #c9c3b6"></div><div class="t" style="left:673.5px;top:374.8px;font-family:'Liberation Serif',serif;font-style:italic;font-size:9.5px;color:#1c1c1c">fx</div><div class="t" style="left:688.80px;top:375.00px;font-size:10px;font-weight:normal;font-style:normal;color:#071650;-webkit-text-stroke:0.1px #071650">MVI_</div>
<div class="a" style="left:716px;top:371px;width:30px;height:34px;background:#844646"></div><div class="a" style="left:716px;top:371px;width:26px;height:16px;background:#76a0d6"></div><div class="a" style="left:726px;top:374px;width:12px;height:11px;background:#5c5c5c;border:1px solid #c9c3b6"></div><div class="t" style="left:728px;top:374.8px;font-family:'Liberation Serif',serif;font-style:italic;font-size:9.5px;color:#1c1c1c">fx</div><div class="a" style="left:716px;top:371px;width:1px;height:34px;background:#c69494"></div>
<div class="a" style="left:747px;top:371px;width:44px;height:34px;background:#844646"></div><div class="a" style="left:747px;top:371px;width:26px;height:16px;background:#76a0d6"></div><div class="a" style="left:757px;top:374px;width:12px;height:11px;background:#5c5c5c;border:1px solid #c9c3b6"></div><div class="t" style="left:759px;top:374.8px;font-family:'Liberation Serif',serif;font-style:italic;font-size:9.5px;color:#1c1c1c">fx</div><div class="a" style="left:747px;top:371px;width:1px;height:34px;background:#c69494"></div>
<div class="a" style="left:664px;top:410px;width:65px;height:24px;background:linear-gradient(#8a4c4c,#7b4444);"></div><div class="a" style="left:664px;top:416px;width:65px;height:1px;background:#8fb2ea"></div><div class="a" style="left:664px;top:418px;width:65px;height:1px;background:#8fb2ea"></div><div class="a" style="left:664px;top:428px;width:65px;height:1px;background:#8fb2ea"></div><div class="a" style="left:664px;top:430px;width:65px;height:1px;background:#8fb2ea"></div><div class="a" style="left:663px;top:413px;width:12px;height:11px;background:#5c5c5c;border:1px solid #c9c3b6"></div><div class="t" style="left:665px;top:413.8px;font-family:'Liberation Serif',serif;font-style:italic;font-size:9.5px;color:#1c1c1c">fx</div>
<div class="a" style="left:730px;top:410px;width:61px;height:24px;background:linear-gradient(#8a4c4c,#7b4444);border-left:1px solid #c69494;"></div><div class="a" style="left:730px;top:416px;width:61px;height:1px;background:#8fb2ea"></div><div class="a" style="left:730px;top:418px;width:61px;height:1px;background:#8fb2ea"></div><div class="a" style="left:730px;top:428px;width:61px;height:1px;background:#8fb2ea"></div><div class="a" style="left:730px;top:430px;width:61px;height:1px;background:#8fb2ea"></div><div class="a" style="left:740px;top:413px;width:12px;height:11px;background:#5c5c5c;border:1px solid #c9c3b6"></div><div class="t" style="left:742px;top:413.8px;font-family:'Liberation Serif',serif;font-style:italic;font-size:9.5px;color:#1c1c1c">fx</div>
<div class="a" style="left:694px;top:435px;width:76px;height:24px;background:linear-gradient(#8a4c4c,#7b4444);border-left:1px solid #c69494;"></div><div class="a" style="left:694px;top:441px;width:76px;height:1px;background:#8fb2ea"></div><div class="a" style="left:694px;top:443px;width:76px;height:1px;background:#8fb2ea"></div><div class="a" style="left:694px;top:453px;width:76px;height:1px;background:#8fb2ea"></div><div class="a" style="left:694px;top:455px;width:76px;height:1px;background:#8fb2ea"></div><div class="a" style="left:704px;top:438px;width:12px;height:11px;background:#5c5c5c;border:1px solid #c9c3b6"></div><div class="t" style="left:706px;top:438.8px;font-family:'Liberation Serif',serif;font-style:italic;font-size:9.5px;color:#1c1c1c">fx</div>
<div class="a" style="left:795px;top:435px;width:6px;height:24px;background:linear-gradient(#8a4c4c,#7b4444);border-left:1px solid #c69494;"></div><div class="a" style="left:795px;top:441px;width:6px;height:1px;background:#8fb2ea"></div><div class="a" style="left:795px;top:443px;width:6px;height:1px;background:#8fb2ea"></div><div class="a" style="left:795px;top:453px;width:6px;height:1px;background:#8fb2ea"></div><div class="a" style="left:795px;top:455px;width:6px;height:1px;background:#8fb2ea"></div>
<div class="a" style="left:756px;top:460px;width:17px;height:24px;background:linear-gradient(#8a4c4c,#7b4444);border-left:1px solid #c69494;"></div><div class="a" style="left:756px;top:466px;width:17px;height:1px;background:#8fb2ea"></div><div class="a" style="left:756px;top:468px;width:17px;height:1px;background:#8fb2ea"></div><div class="a" style="left:756px;top:478px;width:17px;height:1px;background:#8fb2ea"></div><div class="a" style="left:756px;top:480px;width:17px;height:1px;background:#8fb2ea"></div>
<div class="a" style="left:664px;top:487px;width:137px;height:11px;background:#262626;"></div>
<div class="a" style="left:664px;top:487px;width:109px;height:11px;background:#303030;"></div>
<svg style="left:767px;top:486px" width="12" height="12" viewBox="0 0 12 12"><circle cx="6" cy="6" r="4" fill="#262626" stroke="#a8a8a8" stroke-width="2"/></svg>
<div class="a" style="left:0px;top:513px;width:801px;height:15px;background:#232323;"></div>
<svg style="left:0;top:510px" width="24" height="18" viewBox="0 0 24 18"><circle cx="6.8" cy="13.6" r="4.7" fill="#bdbdbd"/><circle cx="12.2" cy="11.6" r="6" fill="#bdbdbd"/><circle cx="6.8" cy="13.6" r="3.5" fill="#232323"/><circle cx="12.2" cy="11.6" r="4.8" fill="#232323"/><circle cx="6.8" cy="13.6" r="2.4" fill="#bdbdbd"/><circle cx="12.2" cy="11.6" r="3.7" fill="#bdbdbd"/><path d="M5.5 12.5C7 12.5 8.5 15.5 10 15.5" stroke="#232323" stroke-width="1.2" fill="none"/><path d="M5.8 12.2C7.8 11.5 9 11 10.8 9.8" stroke="#232323" stroke-width="1.2" fill="none"/></svg>
<div class="a" style="left:435px;top:-10px;width:229px;height:560px;background:#f0f0f0;border:1px solid #d5d5d5"></div>
<div class="t" style="left:470.50px;top:5.00px;font-size:12px;font-weight:normal;font-style:normal;color:#000;transform:scaleX(0.9896);transform-origin:0 0;-webkit-text-stroke:0.15px #000">View Hidden</div>
<div class="a" style="left:466px;top:25px;width:195px;height:1px;background:#d7d7d7;"></div>
<div class="t" style="left:469.41px;top:34.00px;font-size:12px;font-weight:normal;font-style:normal;color:#000;transform:scaleX(1.0912);transform-origin:0 0;-webkit-text-stroke:0.15px #000">Modify</div>
<svg style="left:646px;top:35px" width="7" height="9" viewBox="0 0 7 9"><path d="M1.5 0.8L5.5 4.5L1.5 8.2" fill="none" stroke="#404040" stroke-width="1.3"/></svg>
<div class="t" style="left:469.53px;top:56.00px;font-size:12px;font-weight:normal;font-style:normal;color:#000;transform:scaleX(0.9683);transform-origin:0 0;-webkit-text-stroke:0.15px #000">Properties...</div>
<div class="t" style="left:469.54px;top:78.00px;font-size:12px;font-weight:normal;font-style:normal;color:#6d6d6d;transform:scaleX(0.9570);transform-origin:0 0;-webkit-text-stroke:0.15px #6d6d6d">Source Settings...</div>
<div class="t" style="left:469.55px;top:100.00px;font-size:12px;font-weight:normal;font-style:normal;color:#6d6d6d;transform:scaleX(0.9505);transform-origin:0 0;-webkit-text-stroke:0.15px #6d6d6d">Sequence Settings...</div>
<div class="t" style="left:469.54px;top:122.00px;font-size:12px;font-weight:normal;font-style:normal;color:#6d6d6d;transform:scaleX(0.9619);transform-origin:0 0;-webkit-text-stroke:0.15px #6d6d6d">Reveal in Explorer...</div>
<div class="t" style="left:469.53px;top:144.00px;font-size:12px;font-weight:normal;font-style:normal;color:#6d6d6d;transform:scaleX(0.9700);transform-origin:0 0;-webkit-text-stroke:0.15px #6d6d6d">Reveal Original...</div>
<div class="t" style="left:469.54px;top:166.00px;font-size:12px;font-weight:normal;font-style:normal;color:#000;transform:scaleX(0.9614);transform-origin:0 0;-webkit-text-stroke:0.15px #000">Rename</div>
<div class="a" style="left:466px;top:186px;width:195px;height:1px;background:#d7d7d7;"></div>
<div class="t" style="left:469.53px;top:195.00px;font-size:12px;font-weight:normal;font-style:normal;color:#000;transform:scaleX(0.9724);transform-origin:0 0;-webkit-text-stroke:0.15px #000">Insert</div>
<div class="t" style="left:470.50px;top:217.00px;font-size:12px;font-weight:normal;font-style:normal;color:#000;transform:scaleX(0.9843);transform-origin:0 0;-webkit-text-stroke:0.15px #000">Overwrite</div>
<div class="a" style="left:466px;top:237px;width:195px;height:1px;background:#d7d7d7;"></div>
<div class="t" style="left:470.50px;top:246.00px;font-size:12px;font-weight:normal;font-style:normal;color:#6d6d6d;transform:scaleX(0.9686);transform-origin:0 0;-webkit-text-stroke:0.15px #6d6d6d">Auto Reframe Sequence...</div>
<div class="a" style="left:466px;top:266px;width:195px;height:1px;background:#d7d7d7;"></div>
<div class="t" style="left:469.51px;top:275.00px;font-size:12px;font-weight:normal;font-style:normal;color:#000;transform:scaleX(0.9858);transform-origin:0 0;-webkit-text-stroke:0.15px #000">New Bin From Selection</div>
<div class="t" style="left:469.52px;top:297.00px;font-size:12px;font-weight:normal;font-style:normal;color:#000;transform:scaleX(0.9822);transform-origin:0 0;-webkit-text-stroke:0.15px #000">New Sequence From Clip</div>
<div class="a" style="left:466px;top:317px;width:195px;height:1px;background:#d7d7d7;"></div>
<div class="t" style="left:469.54px;top:326.00px;font-size:12px;font-weight:normal;font-style:normal;color:#000;transform:scaleX(0.9596);transform-origin:0 0;-webkit-text-stroke:0.15px #000">Replace Footage...</div>
<div class="a" style="left:438px;top:343px;width:223px;height:22px;background:#91c9f7;"></div>
<div class="t" style="left:469.50px;top:348.00px;font-size:12px;font-weight:normal;font-style:normal;color:#000;-webkit-text-stroke:0.15px #000">Link Media...</div>
<div class="t" style="left:469.49px;top:370.00px;font-size:12px;font-weight:normal;font-style:normal;color:#6d6d6d;transform:scaleX(1.0120);transform-origin:0 0;-webkit-text-stroke:0.15px #6d6d6d">Make Offline...</div>
<div class="t" style="left:469.50px;top:392.00px;font-size:12px;font-weight:normal;font-style:normal;color:#000;transform:scaleX(1.0045);transform-origin:0 0;-webkit-text-stroke:0.15px #000">Edit Offline...</div>
<div class="t" style="left:469.52px;top:414.00px;font-size:12px;font-weight:normal;font-style:normal;color:#000;transform:scaleX(0.9767);transform-origin:0 0;-webkit-text-stroke:0.15px #000">Proxy</div>
<svg style="left:646px;top:415px" width="7" height="9" viewBox="0 0 7 9"><path d="M1.5 0.8L5.5 4.5L1.5 8.2" fill="none" stroke="#404040" stroke-width="1.3"/></svg>
<div class="a" style="left:466px;top:434px;width:195px;height:1px;background:#d7d7d7;"></div>
<div class="t" style="left:469.49px;top:443.00px;font-size:12px;font-weight:normal;font-style:normal;color:#6d6d6d;transform:scaleX(1.0055);transform-origin:0 0;-webkit-text-stroke:0.15px #6d6d6d">Speed/Duration...</div>
<div class="a" style="left:466px;top:463px;width:195px;height:1px;background:#d7d7d7;"></div>
<div class="t" style="left:470.50px;top:472.00px;font-size:12px;font-weight:normal;font-style:normal;color:#6d6d6d;transform:scaleX(0.9926);transform-origin:0 0;-webkit-text-stroke:0.15px #6d6d6d">Audio Gain...</div>
<div class="a" style="left:466px;top:492px;width:195px;height:1px;background:#d7d7d7;"></div>
<div class="t" style="left:469.54px;top:501.00px;font-size:12px;font-weight:normal;font-style:normal;color:#6d6d6d;transform:scaleX(0.9597);transform-origin:0 0;-webkit-text-stroke:0.15px #6d6d6d">Disable Source Clip Effects</div>
<div class="a" style="left:466px;top:521px;width:195px;height:1px;background:#d7d7d7;"></div>
</body></html>
